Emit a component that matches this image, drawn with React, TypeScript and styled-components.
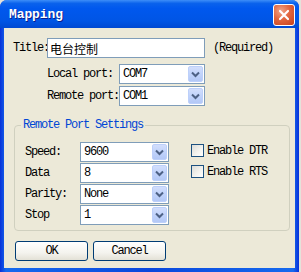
import React from 'react';
import styled, { createGlobalStyle } from 'styled-components';

const GlobalStyle = createGlobalStyle`
  html, body { margin: 0; padding: 0; background: #e4e2da; }
  body {
    font-family: "Liberation Mono", "Noto Sans CJK SC", monospace;
    font-size: 12px;
    color: #000;
  }
  * { box-sizing: border-box; }
`;

const Window = styled.div`
  width: 299px;
  height: 272px;
  display: flex;
  flex-direction: column;
  background: linear-gradient(90deg, #0831d9 0%, #166aee 2%, #0a47dc 50%, #166aee 98%, #0831d9 100%);
  border-radius: 7px 7px 0 0;
  overflow: hidden;
`;

const TitleBar = styled.div`
  height: 28px;
  flex: none;
  display: flex;
  align-items: center;
  justify-content: space-between;
  padding: 0 4px 0 9px;
  background: linear-gradient(180deg, #3d8ef8 0%, #0a62ec 12%, #0058ee 30%, #0055e5 75%, #0049d2 100%);
`;

const TitleText = styled.div`
  color: #fff;
  font-family: "Liberation Mono", monospace;
  font-weight: bold;
  font-size: 13px;
  letter-spacing: -0.1px;
  text-shadow: 1px 1px #0a1e8c;
  margin-top: 1px;
`;

const CloseButton = styled.div`
  width: 22px;
  height: 22px;
  border: 1px solid #fff;
  border-radius: 3px;
  background: radial-gradient(circle at 35% 30%, #f0a58a 0%, #e2663f 45%, #c5401b 100%);
  display: flex;
  align-items: center;
  justify-content: center;
  margin-top: 2px;
`;

const Body = styled.div`
  flex: 1;
  margin: 0 4px 4px;
  background: #ece9d8;
  padding-top: 10px;
  display: flex;
  flex-direction: column;
`;

const TitleRow = styled.div`
  display: flex;
  align-items: center;
  height: 20px;
  padding-left: 9px;
`;

const Label = styled.span<{ $w: number }>`
  width: ${(p) => p.$w}px;
  flex: none;
  white-space: nowrap;
  font-size: 12px;
  letter-spacing: -1.2px;
`;

const TextInput = styled.div`
  width: 158px;
  height: 20px;
  border: 1px solid #7f9db9;
  background: #fff;
  padding: 0 2px;
  display: flex;
  align-items: center;
  font-family: "Noto Sans CJK SC", sans-serif;
  font-size: 12px;
`;

const Hint = styled.span`
  margin-left: 8px;
  letter-spacing: -1.2px;
`;

const PortRows = styled.div`
  display: flex;
  flex-direction: column;
  gap: 2px;
  margin: 6px 0 0 43px;
`;

const Row = styled.div`
  display: flex;
  align-items: center;
  height: 20px;
`;

const ComboBox = styled.div<{ $w: number }>`
  width: ${(p) => p.$w}px;
  height: 20px;
  border: 1px solid #7f9db9;
  background: #fff;
  padding: 1px;
  display: flex;
  align-items: stretch;
`;

const ComboText = styled.span`
  flex: 1;
  display: flex;
  align-items: center;
  padding-left: 2px;
  letter-spacing: -1.2px;
`;

const ArrowButton = styled.span`
  width: 15px;
  flex: none;
  border: 1px solid #bdd0fa;
  border-radius: 2px;
  background: linear-gradient(180deg, #d2defc 0%, #c1d3fb 50%, #b3c8f6 100%);
  display: flex;
  align-items: center;
  justify-content: center;
`;

const GroupBox = styled.fieldset`
  margin: 13px 0 0 10px;
  width: 276px;
  border: 1px solid #d0d0bf;
  border-radius: 4px;
  padding: 11px 10px 5px 10px;
  min-width: 0;
  display: flex;
  gap: 22px;
`;

const Legend = styled.legend`
  color: #0046d5;
  padding: 0 2px;
  margin-left: -4px;
  line-height: 12px;
  letter-spacing: -1.2px;
`;

const Column = styled.div`
  display: flex;
  flex-direction: column;
  gap: 1px;
`;

const CheckRow = styled.label`
  display: flex;
  align-items: flex-start;
  height: 20px;
  padding-top: 2px;
  letter-spacing: -1.2px;
`;

const CheckBox = styled.span`
  width: 13px;
  height: 13px;
  flex: none;
  border: 1px solid #1c5180;
  background: linear-gradient(135deg, #dcdcd7 0%, #f4f4f0 60%, #fff 100%);
  margin-right: 3px;
`;

const CheckText = styled.span`
  line-height: 14px;
`;

const ButtonRow = styled.div`
  display: flex;
  gap: 5px;
  margin: 10px 0 0 11px;
`;

const Button = styled.div`
  width: 73px;
  height: 20px;
  border: 1px solid #003c74;
  border-radius: 3px;
  background: linear-gradient(180deg, #ffffff 0%, #f4f3ee 60%, #e3e1d6 100%);
  display: flex;
  align-items: center;
  justify-content: center;
  letter-spacing: -1.2px;
`;

const Chevron = () => (
  <svg width="9" height="7" viewBox="0 0 9 7">
    <path d="M1 1.5 L4.5 5 L8 1.5" fill="none" stroke="#4d6185" strokeWidth="2" />
  </svg>
);

const Combo = ({ w, value }: { w: number; value: string }) => (
  <ComboBox $w={w}>
    <ComboText>{value}</ComboText>
    <ArrowButton>
      <Chevron />
    </ArrowButton>
  </ComboBox>
);

const settings = [
  { label: 'Speed:', value: '9600' },
  { label: 'Data', value: '8' },
  { label: 'Parity:', value: 'None' },
  { label: 'Stop', value: '1' },
];

const App = () => (
  <>
    <GlobalStyle />
    <Window>
      <TitleBar>
        <TitleText>Mapping</TitleText>
        <CloseButton>
          <svg width="12" height="12" viewBox="0 0 12 12">
            <path d="M2 2 L10 10 M10 2 L2 10" stroke="#fff" strokeWidth="2.2" strokeLinecap="round" />
          </svg>
        </CloseButton>
      </TitleBar>
      <Body>
        <TitleRow>
          <Label $w={34}>Title:</Label>
          <TextInput>电台控制</TextInput>
          <Hint>(Required)</Hint>
        </TitleRow>
        <PortRows>
          <Row>
            <Label $w={72}>Local port:</Label>
            <Combo w={86} value="COM7" />
          </Row>
          <Row>
            <Label $w={72}>Remote port:</Label>
            <Combo w={86} value="COM1" />
          </Row>
        </PortRows>
        <GroupBox>
          <Legend>Remote Port Settings</Legend>
          <Column>
            {settings.map((s) => (
              <Row key={s.label}>
                <Label $w={55}>{s.label}</Label>
                <Combo w={89} value={s.value} />
              </Row>
            ))}
          </Column>
          <Column>
            <CheckRow>
              <CheckBox />
              <CheckText>Enable DTR</CheckText>
            </CheckRow>
            <CheckRow>
              <CheckBox />
              <CheckText>Enable RTS</CheckText>
            </CheckRow>
          </Column>
        </GroupBox>
        <ButtonRow>
          <Button>OK</Button>
          <Button>Cancel</Button>
        </ButtonRow>
      </Body>
    </Window>
  </>
);

export default App;
